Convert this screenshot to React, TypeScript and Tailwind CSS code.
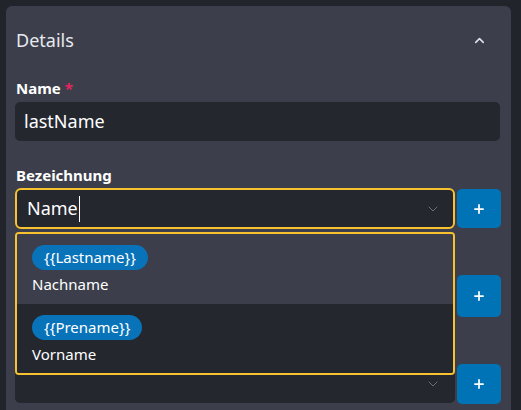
import React from 'react';
import { ChevronUp, ChevronDown, Plus } from 'lucide-react';

const font = { fontFamily: '"Noto Sans", "Open Sans", sans-serif' };

function AddButton({ className = '' }: { className?: string }) {
  return (
    <button className={`w-[44px] shrink-0 rounded-[5px] bg-[#0073b7] flex items-center justify-center text-white ${className}`}>
      <Plus className="w-[14px] h-[14px]" strokeWidth={3} />
    </button>
  );
}

const options = [
  { token: '{{Lastname}}', label: 'Nachname', active: true },
  { token: '{{Prename}}', label: 'Vorname', active: false },
];

export default function App() {
  return (
    <div className="w-[521px] h-[410px] overflow-hidden bg-[#22242b] pl-[6px] pt-[6px] pr-[10px]" style={font}>
      <div className="bg-[#3c3f4b] rounded-[6px] pl-[9px] pr-[10px] pb-[20px]">
        {/* section header */}
        <div className="h-[68px] flex items-center justify-between pl-[1px] pr-[14px]">
          <span className="text-[18px] text-[#e8e9ee]">Details</span>
          <ChevronUp className="w-[15px] h-[15px] text-[#dfe3ec]" strokeWidth={2.5} />
        </div>

        {/* Name */}
        <div className="h-[28px] flex items-center pl-[1px] text-[15px] font-bold text-white">
          Name <span className="text-[#e3245f] ml-[4px]">*</span>
        </div>
        <div className="h-[39px] mr-[1px] rounded-[5px] bg-[#25272f] flex items-center pl-[9px] text-[18px] text-white">
          lastName
        </div>

        {/* Bezeichnung */}
        <div className="mt-[21px] h-[26px] flex items-center pl-[1px] text-[15px] font-bold text-white">
          Bezeichnung
        </div>
        <div className="flex gap-[2px]">
          <div className="relative w-[440px] shrink-0">
            <div className="h-[41px] rounded-[6px] border-2 border-[#f7c22f] bg-[#25272f] flex items-center justify-between pl-[10px] pr-[12px]">
              <span className="text-[18px] text-white flex items-center">
                Name<span className="inline-block w-[1px] h-[26px] bg-white ml-[1px]" />
              </span>
              <ChevronDown className="w-[16px] h-[16px] text-[#6b7080]" strokeWidth={1.5} />
            </div>

            {/* open suggestion list */}
            <div className="absolute z-10 left-0 right-0 top-[44px] h-[143px] border-2 border-[#f7c22f] rounded-[4px] overflow-hidden flex flex-col">
              {options.map((o) => (
                <div
                  key={o.token}
                  className={`flex-1 flex flex-col items-start pl-[15px] pt-[11px] ${o.active ? 'bg-[#3c3f4b]' : 'bg-[#25272f]'}`}
                >
                  <span className="h-[25px] px-[12px] rounded-full bg-[#0873b9] text-white text-[15px] leading-[25px]">
                    {o.token}
                  </span>
                  <span className="mt-[3px] text-[15px] text-white">{o.label}</span>
                </div>
              ))}
            </div>
          </div>
          <AddButton className="h-[39px] mt-[1px]" />
        </div>

        {/* rows underneath the list */}
        <div className="mt-[20px] h-[26px]" />
        <div className="flex gap-[2px]">
          <div className="w-[440px] shrink-0 h-[42px] rounded-[5px] bg-[#25272f]" />
          <AddButton className="h-[42px]" />
        </div>
        <div className="mt-[21px] h-[26px]" />
        <div className="flex gap-[2px]">
          <div className="w-[440px] shrink-0 h-[39px] rounded-[5px] bg-[#25272f] flex items-center justify-end pr-[14px]">
            <ChevronDown className="w-[16px] h-[16px] text-[#6b7080]" strokeWidth={1.5} />
          </div>
          <AddButton className="h-[40px]" />
        </div>
      </div>
    </div>
  );
}
